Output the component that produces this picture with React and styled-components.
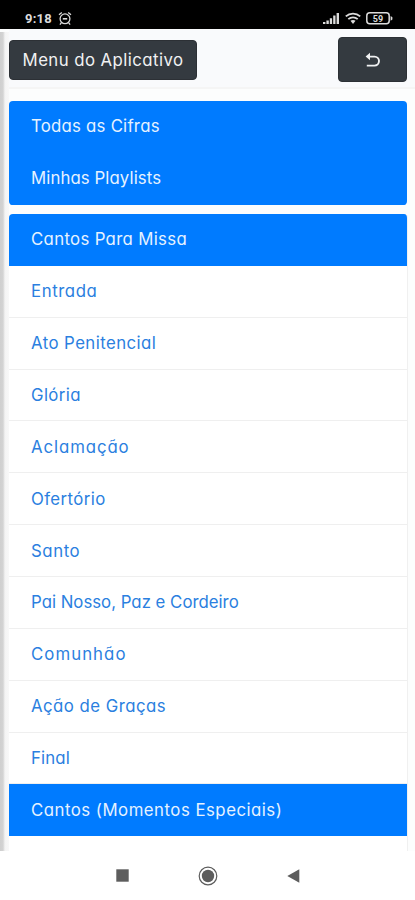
import styled, { createGlobalStyle } from "styled-components";

const GlobalStyle = createGlobalStyle`
    * {
        box-sizing: border-box;
    }
    body {
        margin: 0;
        font-family: Inter, "Open Sans", sans-serif;
        font-feature-settings: "cv11";
    }
`;

const Phone = styled.div`
    display: flex;
    flex-direction: column;
    width: 415px;
    height: 900px;
    overflow: hidden;
    background: white;
`;

const StatusBar = styled.div`
    display: flex;
    flex: none;
    align-items: flex-end;
    justify-content: space-between;
    height: 29px;
    padding: 0 22px 3px 25px;
    background: black;
    color: #dcdcdc;
`;

const StatusGroup = styled.div`
    display: flex;
    align-items: center;
    height: 15px;
    gap: ${(props) => props.$gap}px;
`;

const Time = styled.span`
    font-family: Roboto, sans-serif;
    font-size: 13px;
    font-weight: 700;
    line-height: 15px;
    letter-spacing: 0.2px;
`;

const Page = styled.div`
    display: flex;
    flex: none;
    height: 822px;
    overflow: hidden;
    background: #fcfdfd;
`;

const Edge = styled.div`
    flex: none;
    width: 9px;
    margin-top: 3px;
    background: linear-gradient(to right, #cfcfcf 0, #d3d3d3 3px, #f4f4f4 5px, #f8f8f8 9px);
`;

const Content = styled.div`
    flex: 1;
`;

const Navbar = styled.div`
    display: flex;
    align-items: center;
    justify-content: space-between;
    height: 60px;
    padding: 3px 8px 0 0;
    background: #f9fafc;
    border-bottom: 2px solid #f5f5f5;
`;

const DarkButton = styled.button`
    display: flex;
    align-items: center;
    justify-content: center;
    width: ${(props) => props.$width}px;
    height: ${(props) => props.$height}px;
    padding: 0;
    border: 1px solid #2c3035;
    border-radius: 4px;
    background: #343a40;
    color: #f0f1f2;
    font: inherit;
    font-feature-settings: "cv11";
    font-size: 16.8px;
`;

const Lists = styled.div`
    display: flex;
    flex-direction: column;
    gap: 9.2px;
    padding: 11.5px 8px 0 0;
`;

const ListGroup = styled.div`
    overflow: hidden;
    border-radius: 4px;
    border-right: ${(props) => props.$outlined && "1px solid #f0f0f0"};
    margin-right: ${(props) => props.$outlined && "-1px"};
    background: white;
`;

const ListItem = styled.div`
    display: flex;
    align-items: center;
    height: ${(props) => (props.$tall ? 52.2 : 51.85)}px;
    padding: 0 22px;
    border-bottom: 1px solid ${(props) => (props.$active ? "#007bff" : "#efefef")};
    background: ${(props) => (props.$active ? "#007bff" : "white")};
    color: ${(props) => (props.$active ? "#e6f2ff" : "#2b7fe0")};
    font-size: 16.8px;
    line-height: 24px;
    white-space: nowrap;
`;

const Label = styled.span`
    letter-spacing: ${(props) => props.$spacing || 0}px;
`;

const SystemNav = styled.div`
    display: flex;
    flex: 1;
    align-items: center;
    justify-content: center;
    gap: 69px;
    padding-left: 1px;
    background: white;
`;

const AlarmIcon = () => (
    <svg width="14" height="15" viewBox="0 0 14 15" fill="none" stroke="currentColor" strokeWidth="1.3">
        <circle cx="7" cy="7.8" r="4.9" />
        <path d="M1 3.7 3.8 1.4M13 3.7 10.2 1.4M3.4 11.7l-1.5 2M10.6 11.7l1.5 2" />
        <path d="M4.8 7.8h4.4" strokeWidth="1.6" />
    </svg>
);

const SignalIcon = () => (
    <svg width="17" height="13" viewBox="0 0 17 13" fill="currentColor">
        <path d="M0 10h2.4v2H0zM3.4 8.5h2.4V12H3.4zM6.8 6.3h2.3V12H6.8zM10.2 3.5h2.3V12h-2.3zM13.6 1h2.4v11h-2.4z" />
    </svg>
);

const WifiIcon = () => (
    <svg width="16" height="13" viewBox="0 0 16 13" fill="none" stroke="currentColor" strokeWidth="1.8">
        <path d="M.8 4.4c4-3.7 10.4-3.7 14.4 0M3.3 7.1c2.7-2.4 6.7-2.4 9.4 0" />
        <path d="M5.5 8.8c1.4-1.1 3.6-1.1 5 0L8 12z" fill="currentColor" stroke="none" />
    </svg>
);

const BatteryIcon = () => (
    <svg width="27" height="13" viewBox="0 0 27 13" fill="none" stroke="currentColor">
        <rect x=".8" y=".8" width="22.4" height="11" rx="3" strokeWidth="1.5" />
        <path d="M24.6 4v4.8l1.8-1.2V5.2z" fill="currentColor" stroke="none" />
        <text x="12" y="9.8" textAnchor="middle" fontFamily="Roboto" fontSize="9" fontWeight="700" fill="currentColor" stroke="none">59</text>
    </svg>
);

const BackIcon = () => (
    <svg width="16" height="16" viewBox="0 0 16 16" fill="none" stroke="currentColor" strokeWidth="1.9">
        <path d="M2.5 4.6h7a4.5 4.5 0 0 1 0 9H1.8" />
        <path d="M5 .8.6 4.6 5 8.2z" fill="currentColor" stroke="none" />
    </svg>
);

const SquareIcon = () => (
    <svg width="13" height="13" viewBox="0 0 13 13">
        <rect x=".3" y=".3" width="12.4" height="12.4" fill="#5d5d5d" />
    </svg>
);

const HomeIcon = () => (
    <svg width="20" height="20" viewBox="0 0 20 20">
        <circle cx="10" cy="10" r="8.8" fill="none" stroke="#5c5c5c" strokeWidth="1.2" />
        <circle cx="10" cy="10" r="6.2" fill="#5d5d5d" />
    </svg>
);

const TriangleIcon = () => (
    <svg width="13" height="14" viewBox="0 0 13 14">
        <path d="M12.3.3v13.4L.3 7z" fill="#5d5d5d" />
    </svg>
);

const mainLinks = [
    { label: "Todas as Cifras", spacing: 0.23 },
    { label: "Minhas Playlists", spacing: 0.09 },
];

const songLinks = [
    { label: "Cantos Para Missa", spacing: 0.32, active: true },
    { label: "Entrada", spacing: 0.57 },
    { label: "Ato Penitencial", spacing: 0.43 },
    { label: "Glória", spacing: 0.38 },
    { label: "Aclamação", spacing: 0.91 },
    { label: "Ofertório", spacing: 0.4 },
    { label: "Santo", spacing: 0.56 },
    { label: "Pai Nosso, Paz e Cordeiro", spacing: 0 },
    { label: "Comunhão", spacing: 1.05 },
    { label: "Ação de Graças", spacing: 0.46 },
    { label: "Final", spacing: 0.14 },
    { label: "Cantos (Momentos Especiais)", spacing: 0.49, active: true },
    { label: "" },
];

const App = () => {
    return (
        <Phone>
            <GlobalStyle />
            <StatusBar>
                <StatusGroup $gap={6}>
                    <Time>9:18</Time>
                    <AlarmIcon />
                </StatusGroup>
                <StatusGroup $gap={5}>
                    <SignalIcon />
                    <WifiIcon />
                    <BatteryIcon />
                </StatusGroup>
            </StatusBar>
            <Page>
                <Edge />
                <Content>
                    <Navbar>
                        <DarkButton $width={188} $height={40}>
                            <Label $spacing={0.43}>Menu do Aplicativo</Label>
                        </DarkButton>
                        <DarkButton $width={69} $height={45}>
                            <BackIcon />
                        </DarkButton>
                    </Navbar>
                    <Lists>
                        <ListGroup>
                            {mainLinks.map((item) => (
                                <ListItem key={item.label} $active $tall>
                                    <Label $spacing={item.spacing}>{item.label}</Label>
                                </ListItem>
                            ))}
                        </ListGroup>
                        <ListGroup $outlined>
                            {songLinks.map((item) => (
                                <ListItem key={item.label} $active={item.active}>
                                    <Label $spacing={item.spacing}>{item.label}</Label>
                                </ListItem>
                            ))}
                        </ListGroup>
                    </Lists>
                </Content>
            </Page>
            <SystemNav>
                <SquareIcon />
                <HomeIcon />
                <TriangleIcon />
            </SystemNav>
        </Phone>
    );
};

export default App;
